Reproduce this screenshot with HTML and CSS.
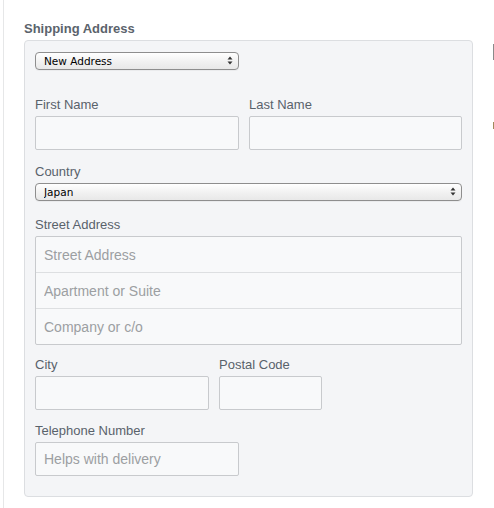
FILE: index.html
```html
<!DOCTYPE html>
<html lang="en">
<head>
<meta charset="utf-8">
<title>Shipping Address</title>
<link rel="stylesheet" href="styles.css">
</head>
<body>
<div class="layout">
  <main class="checkout">
    <h2 class="section-title">Shipping Address</h2>
    <form class="panel">
      <div class="select-wrap select-short">
        <select class="mac-select">
          <option>New Address</option>
        </select>
        <svg class="select-arrows" width="6" height="9" viewBox="0 0 6 9" aria-hidden="true">
          <path d="M3 0.5 L5.5 3.5 H0.5 Z" fill="#333"/>
          <path d="M3 8.5 L5.5 5.5 H0.5 Z" fill="#333"/>
        </svg>
      </div>

      <div class="row two-col name-row">
        <div class="field">
          <label class="label" for="first">First Name</label>
          <input class="input" id="first" type="text">
        </div>
        <div class="field">
          <label class="label" for="last">Last Name</label>
          <input class="input" id="last" type="text">
        </div>
      </div>

      <div class="row country-row">
        <label class="label" for="country">Country</label>
        <div class="select-wrap">
          <select class="mac-select" id="country">
            <option>Japan</option>
          </select>
          <svg class="select-arrows" width="6" height="9" viewBox="0 0 6 9" aria-hidden="true">
            <path d="M3 0.5 L5.5 3.5 H0.5 Z" fill="#333"/>
            <path d="M3 8.5 L5.5 5.5 H0.5 Z" fill="#333"/>
          </svg>
        </div>
      </div>

      <div class="row street-row">
        <label class="label" for="street">Street Address</label>
        <div class="input-group">
          <input class="group-input" id="street" type="text" placeholder="Street Address">
          <input class="group-input" type="text" placeholder="Apartment or Suite">
          <input class="group-input" type="text" placeholder="Company or c/o">
        </div>
      </div>

      <div class="row city-row">
        <div class="field city">
          <label class="label" for="city">City</label>
          <input class="input" id="city" type="text">
        </div>
        <div class="field postal">
          <label class="label" for="postal">Postal Code</label>
          <input class="input" id="postal" type="text">
        </div>
      </div>

      <div class="row phone-row">
        <label class="label" for="phone">Telephone Number</label>
        <input class="input phone" id="phone" type="tel" placeholder="Helps with delivery">
      </div>
    </form>
  </main>
  <aside class="side">
    <span class="side-box"></span>
    <span class="side-mark"></span>
  </aside>
</div>
</body>
</html>
```

FILE: styles.css
```css
html, body {
  margin: 0;
  padding: 0;
  overflow: hidden;
  background: #fff;
}

body {
  font-family: "Liberation Sans", Arial, Helvetica, sans-serif;
}

.layout {
  display: flex;
  padding-left: 3px;
  min-height: 508px;
}

.checkout {
  flex: 0 0 449px;
  border-left: 1px solid #e6e7e8;
  padding: 21px 20px 0 20px;
}

.section-title {
  margin: 0 0 3px 0;
  font-size: 13px;
  line-height: 16px;
  font-weight: bold;
  color: #5b636c;
}

.panel {
  margin: 0;
  background: #f4f5f7;
  border: 1px solid #dcdee1;
  border-radius: 4px;
  padding: 11px 10px 20px 10px;
}

/* native-looking popup buttons */
.select-wrap {
  position: relative;
  height: 18px;
}

.select-short {
  width: 204px;
}

.mac-select {
  -webkit-appearance: none;
  appearance: none;
  display: block;
  box-sizing: border-box;
  width: 100%;
  height: 18px;
  margin: 0;
  padding: 0 0 0 8px;
  border: 1px solid #8e8e8e;
  border-radius: 4px;
  background: linear-gradient(#ffffff, #f1f1f1 55%, #e8e8e8);
  box-shadow: 0 1px 0 rgba(0, 0, 0, 0.04);
  font-family: "DejaVu Sans", Verdana, sans-serif;
  font-size: 10.5px;
  line-height: 16px;
  color: #000;
}

.select-arrows {
  position: absolute;
  right: 6px;
  top: 4px;
  pointer-events: none;
}

.row {
  display: block;
}

.name-row {
  margin-top: 26px;
}

.two-col {
  display: grid;
  grid-template-columns: 204px 1fr;
  column-gap: 10px;
}

.label {
  display: block;
  font-size: 13px;
  line-height: 17px;
  color: #59626b;
  margin-bottom: 3px;
}

.input {
  display: block;
  box-sizing: border-box;
  width: 100%;
  height: 34px;
  margin: 0;
  padding: 0 8px;
  background: #f8f9fa;
  border: 1px solid #c8cacd;
  border-radius: 2px;
  font-family: inherit;
  font-size: 14px;
  color: #333;
}

.input::placeholder,
.group-input::placeholder {
  color: #9c9fa2;
}

.country-row {
  margin-top: 13px;
}

.street-row {
  margin-top: 15px;
}

.input-group {
  display: flex;
  flex-direction: column;
  border: 1px solid #c8cacd;
  border-radius: 2px;
  background: #f8f9fa;
}

.group-input {
  display: block;
  box-sizing: border-box;
  width: 100%;
  height: 36px;
  margin: 0;
  padding: 0 8px;
  border: 0;
  border-top: 1px solid #dddfe1;
  background: transparent;
  font-family: inherit;
  font-size: 14px;
  color: #333;
}

.group-input:first-child {
  border-top: 0;
  height: 35px;
}

.city-row {
  display: flex;
  gap: 10px;
  margin-top: 11px;
}

.city {
  width: 174px;
}

.postal {
  width: 103px;
}

.phone-row {
  margin-top: 12px;
}

.input.phone {
  width: 204px;
}

/* edge of the neighbouring column */
.side {
  display: flex;
  flex-direction: column;
  align-items: flex-start;
  padding-top: 44px;
}

.side-box {
  display: block;
  width: 12px;
  height: 16px;
  border: 1px solid #8a8a8a;
  box-sizing: border-box;
  background: #fff;
}

.side-mark {
  display: block;
  width: 2px;
  height: 7px;
  margin-top: 62px;
  background: #a08a5c;
}
```
